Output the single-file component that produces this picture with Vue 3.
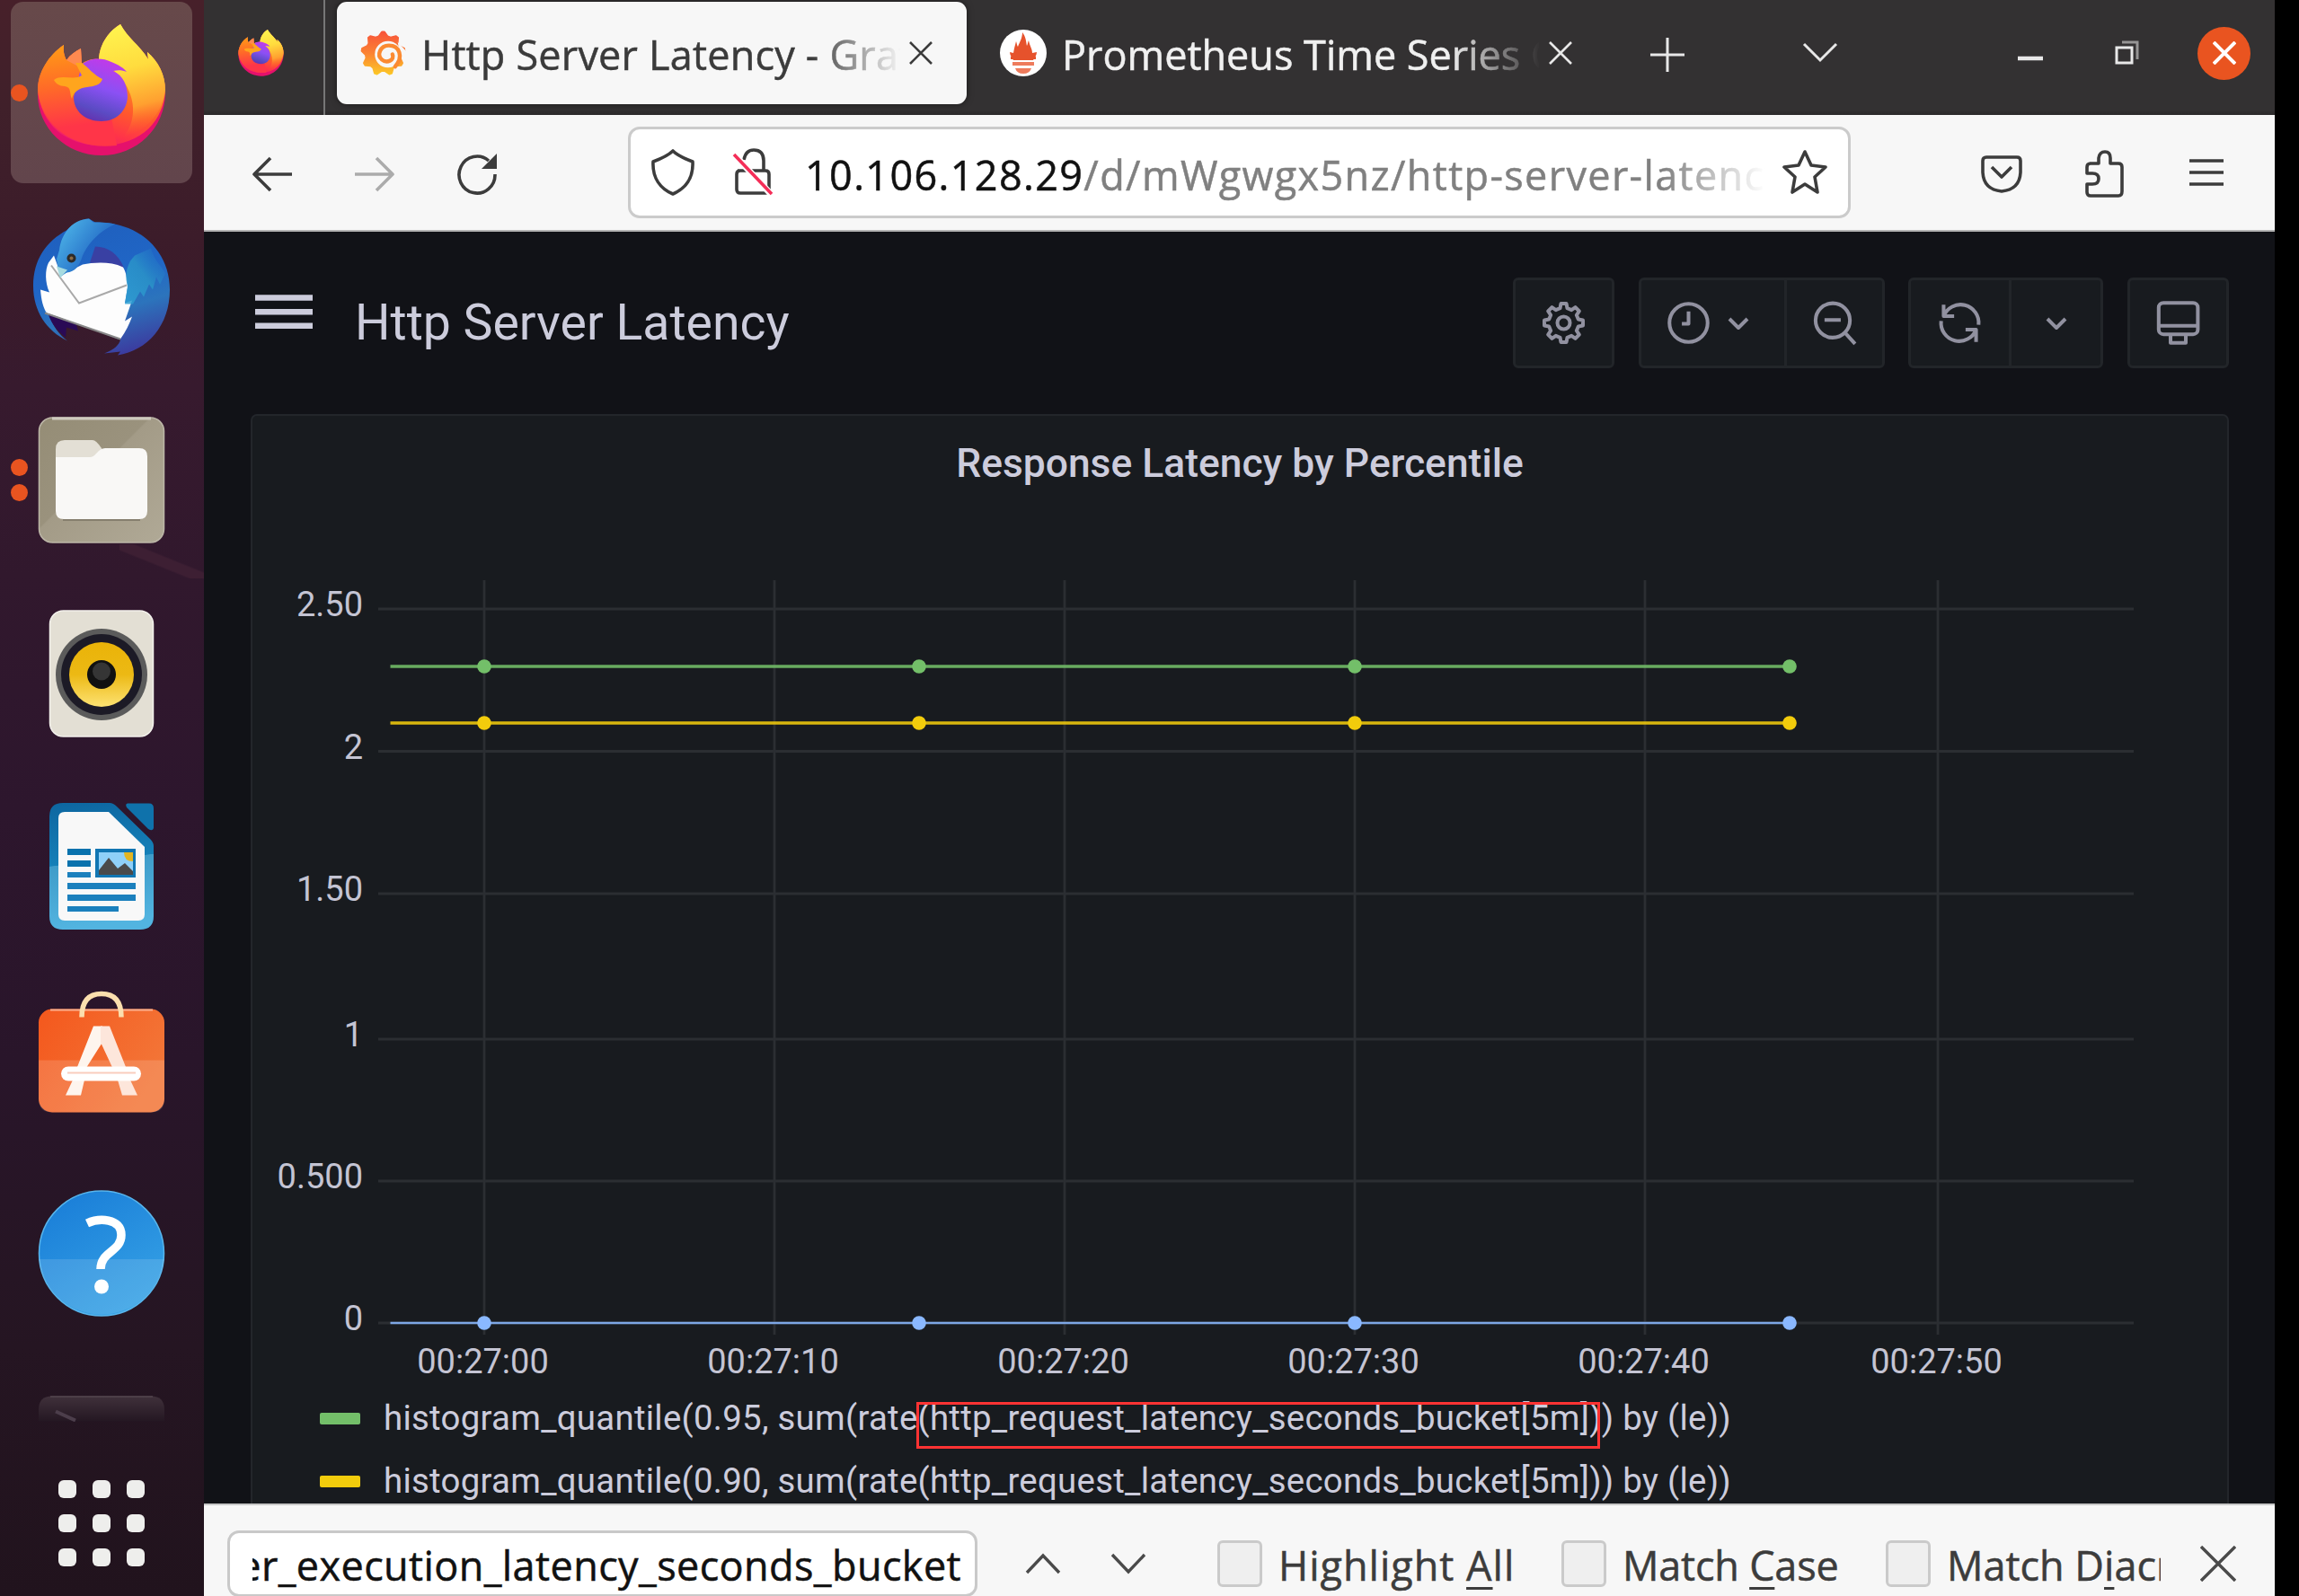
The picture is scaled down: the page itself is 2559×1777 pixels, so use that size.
<script setup>
const rows = [
  { y: 678, label: '2.50' }, { y: 836.5, label: '2' }, { y: 995, label: '1.50' },
  { y: 1157, label: '1' }, { y: 1315, label: '0.500' }, { y: 1473, label: '0' },
]
const cols = [
  { x: 539, label: '00:27:00' }, { x: 862, label: '00:27:10' }, { x: 1185, label: '00:27:20' },
  { x: 1508, label: '00:27:30' }, { x: 1831, label: '00:27:40' }, { x: 2157, label: '00:27:50' },
]
const series = [
  { y: 742, color: '#73bf69', w: 3.4 }, { y: 805, color: '#f2cc0c', w: 3.4 }, { y: 1473, color: '#8ab8ff', w: 2.4 },
]
const points = [539, 1023, 1508, 1992]

function ring(n, cx, cy, outer, inner, top, base) {
  const out = []
  for (let i = 0; i < n; i++) {
    const a = (i * 2 * Math.PI) / n - Math.PI / 2
    const steps = [[-base, inner], [-top, outer], [top, outer], [base, inner]]
    for (const [d, r] of steps) {
      out.push(`${(cx + r * Math.cos(a + d)).toFixed(2)} ${(cy + r * Math.sin(a + d)).toFixed(2)}`)
    }
  }
  return 'M' + out.join('L') + 'Z'
}
const gear = ring(8, 12, 12, 10.2, 7.9, 0.14, 0.24)
const burst = ring(9, 426.5, 60, 24.5, 20, 0.06, 0.26)
</script>

<template>
  <div class="screen">
    <aside class="dock">
      <div class="tile active">
        <i class="dots"><b></b></i>
        <svg viewBox="12 2 202 202">
          <defs>
            <linearGradient id="ffBody" x1=".7" y1=".1" x2=".4" y2="1">
              <stop offset="0" stop-color="#ffe03a" /><stop offset=".3" stop-color="#ff9a1f" />
              <stop offset=".62" stop-color="#ff5a2c" /><stop offset=".85" stop-color="#ff3349" /><stop offset="1" stop-color="#f0206a" />
            </linearGradient>
            <linearGradient id="ffFlame" x1=".3" y1="0" x2=".45" y2="1">
              <stop offset="0" stop-color="#fff44f" /><stop offset=".4" stop-color="#ffdc3e" /><stop offset=".75" stop-color="#ffa030" /><stop offset="1" stop-color="#ff5a2c" stop-opacity="0" />
            </linearGradient>
            <linearGradient id="ffLeft" x1=".4" y1="0" x2=".5" y2="1">
              <stop offset="0" stop-color="#ff9a16" /><stop offset=".4" stop-color="#ff6a28" /><stop offset=".8" stop-color="#ff3548" /><stop offset="1" stop-color="#ff3548" />
            </linearGradient>
            <linearGradient id="ffGlobe" x1=".6" y1="0" x2=".3" y2="1">
              <stop offset="0" stop-color="#c23ae8" /><stop offset=".45" stop-color="#8b50f4" /><stop offset=".8" stop-color="#5b4bc4" /><stop offset="1" stop-color="#6530ad" />
            </linearGradient>
            <symbol id="firefox" viewBox="42 27 142 147">
              <path d="M42 105C42 82 54 62 71 50C70 58 72 63 74 67C78 61 84 57 90 54L91 71C96 67 103 65 110 66C111 48 122 34 134 27C142 42 155 50 165 66L164 58C176 68 184 83 184 103C184 143 152 173 113 173C74 173 42 143 42 105Z" fill="#e5116c" />
              <path d="M42 101C42 80 54 62 71 50C70 58 72 63 74 67C78 61 84 57 90 54L91 71C96 67 103 65 110 66C111 48 122 34 134 27C142 42 155 50 165 66L164 58C176 68 184 83 184 101C182 132 160 162 113 162C72 162 46 138 42 101Z" fill="url(#ffBody)" />
              <path d="M42 101C42 80 54 62 71 50C70 58 72 63 74 67L91 72L120 110L130 162C80 168 46 138 42 101Z" fill="url(#ffLeft)" />
              <path d="M74 67C78 61 84 57 90 54L91 76Z" fill="#ff8a50" />
              <path d="M110 66C111 48 122 34 134 27C142 42 155 50 165 66L164 58C176 68 184 83 184 100C181 124 165 146 138 152C155 130 150 100 128 80C124 74 116 68 110 66Z" fill="url(#ffFlame)" />
              <path d="M91 72C98 65 112 63 124 69C132 72 138 76 141 80C136 78 131 78 126 79C137 84 142 95 142 108C141 124 129 135 113 135C95 135 82 124 82 108Z" fill="url(#ffGlobe)" />
              <path d="M60 89C68 82 82 90 91 84L84 70L91 70C98 75 105 84 114 88C112 95 104 96 97 97C88 98 82 102 80 110C77 104 80 97 72 96C66 96 62 93 60 89Z" fill="#ffa51d" />
            </symbol>
          </defs>
          <use href="#firefox" x="42" y="27" width="142" height="147" />
        </svg>
      </div>

      <div class="tile">
        <svg viewBox="12 217.5 202 202">
          <defs>
            <linearGradient id="tbBody" x1=".3" y1="0" x2=".6" y2="1">
              <stop offset="0" stop-color="#1f5fbd" /><stop offset=".45" stop-color="#2066c6" /><stop offset=".7" stop-color="#2c74bc" /><stop offset="1" stop-color="#3b3da0" />
            </linearGradient>
            <linearGradient id="tbHead" x1=".2" y1="0" x2=".9" y2=".5">
              <stop offset="0" stop-color="#4bb1e6" /><stop offset="1" stop-color="#1f62c2" />
            </linearGradient>
            <linearGradient id="tbWing" x1="1" y1="0" x2="0" y2="1">
              <stop offset="0" stop-color="#2273c8" stop-opacity="0" /><stop offset=".5" stop-color="#2a93c8" /><stop offset="1" stop-color="#2fa0d4" />
            </linearGradient>
          </defs>
          <path d="M75 379C52 368 37 346 37 318C37 288 52 268 74 256C80 250 89 243 99 243L106 247C154 246 189 278 189 322C189 362 164 390 131 395L134 391L116 393C128 388 132 384 134 378L54 348C58 362 66 372 75 379Z" fill="url(#tbBody)" />
          <path d="M54 350L85 361L87 368L74 364L73 375C63 367 57 359 54 350Z" fill="#2a0a55" />
          <path d="M106 274C120 274 132 282 138 298L100 292Z" fill="#3e3a9e" opacity=".85" />
          <path d="M60 284L54 292C50 300 50 314 55 325L45 322C46 334 48 342 52 348L134 377C140 369 144 360 147 352L139 357L147 334L139 337L142 320C142 310 140 302 137 297C122 290 104 292 92 294L68 306Z" fill="#fdfdfd" />
          <path d="M57 295L88 337L141 317" fill="none" stroke="#a9a9a9" stroke-width="2" />
          <path d="M50 348L134 377" fill="none" stroke="#888" stroke-width="2" />
          <path d="M142 318C139 308 140 300 145 290L150 284L168 276C172 290 180 296 184 304L178 316L174 308L170 322L166 316L160 330L156 324L148 338L139 338Z" fill="url(#tbWing)" opacity=".85" />
          <path d="M99 243C80 244 68 260 66 278L63 288L67 308L74 303C84 302 88 296 92 284C98 270 112 256 128 249C118 247 108 247 104 247Z" fill="url(#tbHead)" />
          <path d="M63 296L75 300L67 309Z" fill="#a7dbe0" />
          <circle cx="79.500" cy="287" r="5" fill="#2d2a28" />
          <circle cx="79.500" cy="287" r="2" fill="#8b6a45" />
        </svg>
      </div>

      <div class="tile">
        <i class="dots"><b></b><b></b></i>
        <svg viewBox="12 433 202 202">
          <defs>
            <linearGradient id="files" x1="0" y1="0" x2="1" y2="1">
              <stop offset="0" stop-color="#958d76" /><stop offset=".44" stop-color="#9a927d" /><stop offset=".45" stop-color="#a39b87" /><stop offset="1" stop-color="#b0a996" />
            </linearGradient>
          </defs>
          <rect x="43.500" y="465" width="139" height="139" rx="15" fill="url(#files)" stroke="#bdb7a8" stroke-width="1.500" />
          <path d="M58 466H168" stroke="#cfcabf" stroke-width="3" />
          <path d="M62 500Q62 490 72 490H103Q107 490 113 499V520H62Z" fill="#e3dfd5" />
          <path d="M62 509H100Q104 509 107 505L110 502Q113 499 117 499H155Q164 499 164 508V569Q164 578 155 578H71Q62 578 62 569Z" fill="#f9f8f6" />
          <path d="M70 579H156" stroke="#867f6e" stroke-width="2" />
        </svg>
      </div>

      <div class="tile">
        <svg viewBox="12 648.5 202 202">
          <defs>
            <linearGradient id="cone" x1="0" y1="0" x2="0" y2="1">
              <stop offset="0" stop-color="#eab308" /><stop offset=".5" stop-color="#ecb914" /><stop offset="1" stop-color="#fde272" />
            </linearGradient>
          </defs>
          <rect x="55.500" y="679.500" width="115" height="140" rx="15" fill="#e3dfd4" stroke="#f3f1ec" stroke-width="1.500" />
          <circle cx="113" cy="750.500" r="51" fill="#5b5b5b" />
          <circle cx="113" cy="750.500" r="45" fill="#1c1a26" />
          <circle cx="113" cy="750.500" r="36" fill="url(#cone)" />
          <circle cx="113" cy="750.500" r="16" fill="#111" />
          <circle cx="113" cy="747" r="10" fill="#353535" />
        </svg>
      </div>

      <div class="tile">
        <svg viewBox="12 864 202 202">
          <defs>
            <linearGradient id="writer" x1="0" y1="0" x2=".1" y2="1">
              <stop offset="0" stop-color="#0d66a0" /><stop offset=".495" stop-color="#1580b8" /><stop offset=".5" stop-color="#3f9cc9" /><stop offset="1" stop-color="#52b4e0" />
            </linearGradient>
          </defs>
          <path d="M70 894H122Q126 894 130 898L167 934Q171 938 171 942V1020Q171 1035 156 1035H70Q55 1035 55 1020V909Q55 894 70 894Z" fill="url(#writer)" />
          <path d="M142 894.500H166Q171 894.500 171 900V922Q170 926 165 923L141 899Q139 895 142 894.500Z" fill="#0f72ab" />
          <path d="M72 904H121L161 943V1018Q161 1025 154 1025H72Q65 1025 65 1018V911Q65 904 72 904Z" fill="#f8f8f8" />
          <g fill="#1b80bd">
            <rect x="75" y="945" width="26" height="7" fill="#0972ad" /><rect x="75" y="958" width="26" height="7" fill="#0972ad" />
            <rect x="75" y="971" width="26" height="6" /><rect x="75" y="983" width="76" height="7" />
            <rect x="75" y="996" width="76" height="7" /><rect x="75" y="1009" width="57" height="6" />
            <rect x="106" y="945" width="45" height="32" fill="#1176b2" />
          </g>
          <rect x="110" y="949" width="38" height="25" fill="#8fd0f8" />
          <path d="M138 949H148V959Q138 959 138 949Z" fill="#e3b521" />
          <path d="M110 969L121 955L131 967L139 961L148 970V974H110Z" fill="#4a4a4a" />
        </svg>
      </div>

      <div class="tile">
        <svg viewBox="12 1079.5 202 202">
          <defs>
            <linearGradient id="bag" x1="0" y1="0" x2="1" y2=".5">
              <stop offset="0" stop-color="#f4581d" /><stop offset="1" stop-color="#f37537" />
            </linearGradient>
          </defs>
          <rect x="43" y="1123" width="140" height="115" rx="15" fill="url(#bag)" />
          <path d="M43 1180H183V1223Q183 1238 168 1238H58Q43 1238 43 1223Z" fill="#fff" opacity=".15" />
          <path d="M56 1124H170" stroke="#f9b08f" stroke-width="2" />
          <path d="M91 1132Q91 1106 113 1106Q135 1106 135 1132" fill="none" stroke="#fbdfae" stroke-width="5.500" />
          <path d="M104 1142H114V1160L95 1190H85ZM81 1202H94L90 1219H73Z" fill="#fef5ee" />
          <path d="M112 1142H122L141 1190H126L112 1160ZM131 1202H145L153 1219H136Z" fill="#fde6db" />
          <rect x="68" y="1187" width="89" height="16" rx="8" fill="#fff" />
          <path d="M75 1194H151" stroke="#f9cdbd" stroke-width="2" />
        </svg>
      </div>

      <div class="tile">
        <svg viewBox="12 1295 202 202">
          <defs>
            <linearGradient id="help" x1=".2" y1="0" x2=".8" y2="1">
              <stop offset="0" stop-color="#1a7ed8" /><stop offset="1" stop-color="#36a3e6" />
            </linearGradient>
          </defs>
          <circle cx="113" cy="1395.500" r="69.500" fill="url(#help)" stroke="#58b5ec" stroke-width="1.500" />
          <path d="M43.500 1402H182.500A70 70 0 0 1 43.500 1402Z" fill="#fff" opacity=".13" />
          <path d="M97 1362C110 1356 135 1356 135 1375C135 1394 112 1393 112 1413" fill="none" stroke="#fff" stroke-width="9.500" />
          <circle cx="113" cy="1432.500" r="8" fill="#fff" />
        </svg>
      </div>

      <div class="tile peek">
        <svg viewBox="12 1510.5 202 72">
          <defs>
            <linearGradient id="term" x1="0" y1="0" x2="0" y2="1">
              <stop offset="0" stop-color="#40313b" /><stop offset="1" stop-color="#241722" />
            </linearGradient>
          </defs>
          <path d="M43 1582V1569Q43 1554 58 1554H168Q183 1554 183 1569V1582Z" fill="url(#term)" />
          <path d="M56 1554.500H170" stroke="#54464f" stroke-width="1.500" />
          <path d="M62 1571L84 1581" stroke="#4c3e4b" stroke-width="4" />
        </svg>
      </div>
      <div class="apps"><i v-for="n in 9" :key="n"></i></div>
    </aside>

    <main class="window">
      <header class="tabs">
        <div class="pin"><svg class="fav"><use href="#firefox" /></svg></div>
        <div class="tab current">
          <svg class="fav graf" viewBox="401 33 52 53">
            <defs>
              <linearGradient id="graf" x1="0" y1="0" x2="0" y2="1">
                <stop offset="0" stop-color="#f8543a" /><stop offset=".5" stop-color="#fb8232" /><stop offset="1" stop-color="#fcc626" />
              </linearGradient>
            </defs>
            <path :d="burst" fill="url(#graf)" stroke="url(#graf)" stroke-width="2" stroke-linejoin="round" />
            <circle cx="432" cy="61" r="15" fill="#f7f7f7" />
            <path d="M454 59L443 47L446 64Z" fill="#f7f7f7" />
            <path d="M440 75C450 64 445 51 433 51C423 51 419 62 425 67C431 72 440 67 437 61" fill="none" stroke="#fb8a31" stroke-width="4.500" stroke-linecap="round" />
          </svg>
          <span class="label">Http Server Latency - Grafana</span>
          <svg class="close" viewBox="0 0 26 26"><path d="M1 1L25 25M25 1L1 25" /></svg>
        </div>
        <div class="tab other">
          <svg class="fav" viewBox="0 0 52 52">
            <circle cx="26" cy="26" r="26" fill="#fff" />
            <path d="M15 34C13 31 11 28 11 25L15 26C16 20 17 17 18 13C19 16 19 18 20 19C22 14 25 9 25 3C29 8 29 13 30 18C31 16 31 14 32 12C33 18 36 21 36 26L41 25C41 28 39 31 37 34Z" fill="#e6522c" />
            <path d="M14 36H38V40H14ZM17 43H35Q33 49 26 49Q19 49 17 43Z" fill="#ee7b5c" />
            <path d="M12 30H40V33H12Z" fill="#e6522c" />
          </svg>
          <span class="label">Prometheus Time Series Collection</span>
          <svg class="close" viewBox="0 0 26 26"><path d="M1 1L25 25M25 1L1 25" /></svg>
        </div>
        <svg class="plus" viewBox="0 0 40 40"><path d="M20 1V39M1 20H39" /></svg>
        <svg class="more" viewBox="0 0 40 24"><path d="M2 2L20 20L38 2" /></svg>
        <svg class="min" viewBox="0 0 28 28"><path d="M0 20H28" stroke-width="4.500" /></svg>
        <svg class="restore" viewBox="0 0 28 28"><path d="M8 2H25V21" opacity=".55" /><rect x="2" y="8" width="17" height="17" /></svg>
        <div class="quit"><svg viewBox="0 0 26 26"><path d="M1 1L25 25M25 1L1 25" /></svg></div>
      </header>

      <nav class="toolbar">
        <svg class="back" viewBox="0 0 44 40"><path d="M20 2L2 20L20 38M2 20H44" /></svg>
        <svg class="fwd" viewBox="0 0 44 40"><path d="M24 2L42 20L24 38M42 20H0" /></svg>
        <svg class="reload" viewBox="0 0 46 48"><path d="M43 24A20 20.500 0 1 1 36 9" /><path d="M45 1V18H28Z" fill="#3c3c3c" stroke="none" /></svg>
        <div class="url">
          <svg class="shield" viewBox="0 0 48 52"><path d="M24 2C30 8 38 11 46 14C47 32 38 44 24 50C10 44 1 32 2 14C10 11 18 8 24 2Z" /></svg>
          <svg class="lock" viewBox="0 0 46 54">
            <path d="M6 25H37Q41 25 41 29V46Q41 50 37 50H9Q5 50 5 46V29Q5 25 9 25M13 13Q15 2 24 2Q35 2 35 14V25" />
            <path d="M2 7L43 51" stroke="#fff" stroke-width="7" /><path d="M2 7L44 51" stroke="#f42e58" />
          </svg>
          <span class="address"><b>10.106.128.29</b><span>/d/mWgwgx5nz/http-server-latency</span></span>
          <svg class="star" viewBox="0 0 52 52"><path d="M26 3L33 18L49 20L37 31L40 48L26 39L12 48L15 31L3 20L19 18Z" /></svg>
        </div>
        <svg class="pocket" viewBox="0 0 46 42"><path d="M6 2H40Q44 2 44 6V19Q43 38 23 40Q3 38 2 19V6Q2 2 6 2ZM12 13L23 24L34 13" /></svg>
        <svg class="puzzle" viewBox="0 0 46 54"><path d="M6 15H16V9Q17 2 23 2Q29 2 29 9V15H38Q42 15 42 19V46Q42 51 38 51H7Q3 51 3 47V38H9Q16 38 16 32Q16 26 9 26H3V19Q3 15 7 15" /></svg>
        <svg class="menu" viewBox="0 0 38 32"><path d="M0 3H38M0 16H38M0 29H38" /></svg>
      </nav>

      <section class="grafana">
        <div class="topbar">
          <svg class="burger" viewBox="0 0 64 38"><path d="M0 3.500H64M0 19.300H64M0 34.800H64" /></svg>
          <h1>Http Server Latency</h1>
          <div class="group"><button class="w113"><svg viewBox="0 0 24 24"><path :d="gear" /><circle cx="12" cy="12" r="3.300" /></svg></button></div>
          <div class="group">
            <button class="w163">
              <svg viewBox="0 0 24 24"><circle cx="12" cy="12" r="10" /><path d="M12 6V12.500H8.500" /></svg>
              <svg class="caret" viewBox="0 0 24 16"><path d="M2 3L12 13L22 3" /></svg>
            </button>
            <button class="w111"><svg viewBox="0 0 24 24"><circle cx="11.300" cy="10.700" r="9" /><path d="M7 10.500H15.500M18 17.500L23 23" /></svg></button>
          </div>
          <div class="group">
            <button class="w112"><svg viewBox="0 0 24 24"><path d="M3.500 8.500A9.500 9.500 0 0 1 21.800 13M3.500 2.500V8.500H9M20.500 15.500A9.500 9.500 0 0 1 2.200 11M20.500 22V15.500H15" /></svg></button>
            <button class="w105"><svg class="caret" viewBox="0 0 24 16"><path d="M2 3L12 13L22 3" /></svg></button>
          </div>
          <div class="group"><button class="w113"><svg viewBox="0 0 24 24"><rect x="1.800" y="1.500" width="20.500" height="16.500" rx="2.500" /><path d="M2 13.500H22M8 18V22.500H16V18" /></svg></button></div>
        </div>

        <div class="panel">
          <h2>Response Latency by Percentile</h2>
          <svg class="chart" viewBox="281 570 2198 974">
            <g class="grid">
              <path v-for="r in rows" :key="r.y" :d="`M421 ${r.y}H2375`" />
              <path v-for="c in cols" :key="c.x" :d="`M${c.x} 646V1486`" />
            </g>
            <g class="axis">
              <text v-for="r in rows" :key="r.y" x="404" :y="r.y + 8" text-anchor="end">{{ r.label }}</text>
              <text v-for="c in cols" :key="c.x" :x="c.x - 1.500" y="1528.500" text-anchor="middle">{{ c.label }}</text>
            </g>
            <g v-for="s in series" :key="s.y" :fill="s.color" :stroke="s.color">
              <path :d="`M434.500 ${s.y}H1992`" :stroke-width="s.w" stroke-opacity=".88" />
              <circle v-for="p in points" :key="p" :cx="p" :cy="s.y" r="7.800" stroke="none" />
            </g>
          </svg>
          <div class="legend">
            <p><i class="green"></i>histogram_quantile(0.95, sum(rate<mark>(http_request_latency_seconds_bucket[5m])</mark>) by (le))</p>
            <p><i class="yellow"></i>histogram_quantile(0.90, sum(rate(http_request_latency_seconds_bucket[5m])) by (le))</p>
          </div>
        </div>
      </section>

      <footer class="findbar">
        <div class="query"><span>scheduler_execution_latency_seconds_bucket</span></div>
        <svg class="up" viewBox="0 0 40 24"><path d="M2 22L20 3L38 22" /></svg>
        <svg class="down" viewBox="0 0 40 24"><path d="M2 2L20 21L38 2" /></svg>
        <label class="c1"><i></i><span>Highlight <u>A</u>ll</span></label>
        <label class="c2"><i></i><span>Match <u>C</u>ase</span></label>
        <label class="c3"><i></i><span>Match D<u>i</u>acritics</span></label>
        <svg class="x" viewBox="0 0 40 40"><path d="M1 1L39 39M39 1L1 39" /></svg>
      </footer>
    </main>
  </div>
</template>

<style>
body { margin: 0; background: #000; }
</style>

<style scoped>
* { box-sizing: border-box; }
.screen { display: flex; width: 2559px; height: 1777px; overflow: hidden; background: #000; font-family: "Open Sans", "Noto Sans", sans-serif; -webkit-text-stroke: .5px; }
svg { display: block; flex: none; fill: none; }

.dock {
  width: 227px; flex: none; padding: 2px 0 0 12px; display: flex; flex-direction: column; gap: 13.5px;
  background:
    linear-gradient(to top right, transparent 40%, #3d1f33 43%, #3d1f33 57%, transparent 60%) 133px 606px / 94px 38px no-repeat,
    linear-gradient(#47202a 0, #40202a 120px, #3b1b2a 300px, #371a2e 430px, #31182d 640px, #2d162d 900px, #29152a 1180px, #251522 1500px, #21131d 1777px);
}
.tile { position: relative; width: 202px; height: 202px; flex: none; border-radius: 14px; }
.tile svg { width: 202px; height: 202px; }
.tile.active { background: linear-gradient(#67494a, #62454c); }
.tile.peek, .tile.peek svg { height: 72px; border-radius: 0; }
.dots { position: absolute; left: 0; top: 0; height: 100%; display: flex; flex-direction: column; justify-content: center; gap: 9px; }
.dots b { display: block; width: 19px; height: 19px; border-radius: 50%; background: #e95420; }
.apps { display: grid; grid-template-columns: repeat(3, 20px); gap: 18px; margin: 52px 0 0 53px; }
.apps i { height: 20px; border-radius: 6px; background: #eeeeec; }

.window { width: 2305px; flex: none; display: flex; flex-direction: column; height: 1777px; }
.tabs { height: 128px; flex: none; background: linear-gradient(#333132 0, #333132 122px, #2b292a 128px); display: flex; align-items: center; padding-bottom: 10px; }
.tabs > svg { stroke: #e8e8e8; stroke-width: 3; }
.pin { width: 135px; height: 128px; margin-bottom: -10px; border-right: 2px solid #777; padding: 33px 0 0 38px; flex: none; }
.fav { width: 52px; height: 52px; }
.pin .fav { width: 51px; height: 52px; }
.tab { display: flex; align-items: center; height: 114px; flex: none; border-radius: 11px; }
.tab .label { font-size: 45px; line-height: 60px; white-space: nowrap; overflow: hidden; margin-top: 4px; -webkit-mask-image: linear-gradient(90deg, #000 calc(100% - 100px), transparent); mask-image: linear-gradient(90deg, #000 calc(100% - 100px), transparent); }
.tab .close { width: 26px; height: 26px; stroke-width: 2.6; }
.current { width: 701px; margin-left: 13px; background: #f7f7f7; color: #3b3b3b; padding-left: 26px; box-shadow: 0 0 7px rgba(0, 0, 0, .5); }
.current .label { width: 534px; margin-left: 16px; letter-spacing: .2px; }
.current .close { stroke: #3b3b3b; margin-left: 9px; }
.other { color: #f0f0f0; margin-left: 37px; width: 639px; }
.other .label { width: 532px; margin-left: 17px; }
.other .close { stroke: #e8e8e8; margin-left: 10px; }
.plus { width: 40px; height: 40px; margin: 4px 0 0 84px; }
.more { width: 40px; height: 24px; margin-left: 130px; }
.min { width: 28px; height: 28px; margin-left: 200px; }
.restore { width: 28px; height: 28px; margin-left: 80px; }
.quit { width: 59px; height: 59px; border-radius: 50%; background: #e95420; display: grid; place-items: center; margin-left: 64px; flex: none; }
.quit svg { width: 26px; height: 26px; stroke: #fff; stroke-width: 4; }

.toolbar { height: 130px; flex: none; background: #f7f7f7; border-bottom: 2px solid #b4b4b4; display: flex; align-items: center; padding: 4px 0 0 54px; }
.toolbar svg { stroke: #3c3c3c; stroke-width: 3.6; stroke-linejoin: round; }
.back { width: 44px; height: 40px; }
.fwd { width: 44px; height: 40px; margin-left: 70px; opacity: .4; }
.reload { width: 46px; height: 48px; margin-left: 69px; }
.url { width: 1361px; height: 102px; margin-left: 145px; margin-top: -5px; background: #fff; border: 3px solid #cbcbcb; border-radius: 13px; display: flex; align-items: center; padding-left: 23px; flex: none; }
.url svg { margin-top: 1px; }
.shield { width: 48px; height: 52px; }
.lock { width: 46px; height: 54px; margin-left: 42px; }
.address { width: 1073px; margin: 6px 0 0 35px; overflow: hidden; white-space: nowrap; font-size: 45px; line-height: 64px; letter-spacing: 1.35px; -webkit-mask-image: linear-gradient(90deg, #000 calc(100% - 120px), transparent calc(100% - 4px)); mask-image: linear-gradient(90deg, #000 calc(100% - 120px), transparent calc(100% - 4px)); }
.address b { font-weight: 400; color: #111; }
.address span { color: #808080; }
.star { width: 52px; height: 52px; margin-left: 14px; }
.pocket { width: 46px; height: 42px; margin-left: 145px; }
.puzzle { width: 46px; height: 54px; margin-left: 69px; }
.menu { width: 38px; height: 32px; margin: -4px 0 0 71px; }

.grafana { height: 1416px; flex: none; background: #111217; overflow: hidden; font-family: Roboto, sans-serif; color: #ccccdc; display: flex; flex-direction: column; -webkit-text-stroke: 0; }
.topbar { height: 203px; flex: none; display: flex; align-items: center; padding-left: 57px; }
.burger { width: 64px; height: 38px; margin-top: -26px; stroke: #ccccdc; stroke-width: 6.5; }
h1 { margin: 0; margin-left: 47px; width: 1289px; font-weight: 400; font-size: 55.4px; line-height: 70px; flex: none; }
.group { display: flex; height: 101px; border: 3px solid #222529; border-radius: 6px; background: #181b1f; margin-right: 26.5px; flex: none; }
button { border: 0; background: none; padding: 0; display: flex; align-items: center; justify-content: center; gap: 18px; }
button + button { border-left: 3px solid #222529; }
button svg { width: 51px; height: 51px; stroke: #9191a0; stroke-width: 1.9; stroke-linejoin: round; }
button svg.caret { width: 24px; height: 16px; stroke-width: 4; }
.w113 { width: 107px; } .w163 { width: 159px; padding-right: 12px; } .w111 { width: 109px; } .w112 { width: 109px; } .w105 { width: 102px; }
.panel { width: 2202px; height: 1300px; flex: none; margin-left: 52px; background: #181b1f; border: 2px solid #23262b; border-radius: 7px; display: flex; flex-direction: column; }
h2 { margin: 0; height: 107px; flex: none; text-align: center; font-weight: 500; font-size: 44.4px; line-height: 106px; }
.chart { width: 2198px; height: 974px; }
.grid { stroke: #2b2e32; stroke-width: 2.8; }
.axis { fill: #c4c4d3; font-size: 38px; }
.legend { padding-left: 75px; }
.legend p { margin: 0; height: 70px; line-height: 70px; display: flex; align-items: center; white-space: pre; font-size: 38.4px; letter-spacing: .27px; }
.legend i { width: 45px; height: 13px; margin-right: 26px; border-radius: 2px; }
.green { background: #73bf69; }
.yellow { background: #f2cc0c; }
mark { position: relative; background: none; color: inherit; }
mark::after { content: ""; position: absolute; box-sizing: border-box; left: -2px; right: 2px; top: 17px; height: 52px; border: 3px solid #ff3333; }

.findbar { height: 103px; flex: none; background: #f7f7f7; border-top: 2px solid #c8c8c8; display: flex; align-items: center; color: #3c3c3c; font-size: 45px; padding-left: 26px; }
.findbar svg { stroke: #4a4a4a; stroke-width: 3.4; }
.query { width: 835px; height: 74px; margin-top: 28px; border: 3px solid #c9c9c9; border-radius: 13px; background: #fff; color: #111; flex: none; padding: 0 15px 0 25px; align-self: flex-start; }
.query span { display: flex; justify-content: flex-end; overflow: hidden; line-height: 72px; height: 68px; letter-spacing: .4px; }
.findbar > svg, .findbar > label { margin-top: 28px; }
.up { width: 40px; height: 24px; margin-left: 53px; }
.down { width: 40px; height: 24px; margin-left: 55px; }
label { display: flex; align-items: center; white-space: nowrap; flex: none; }
label i { width: 50px; height: 52px; border: 3px solid #cacaca; border-radius: 6px; background: #efefef; flex: none; }
label span { line-height: 64px; margin: 4px 0 0 18px; overflow: hidden; }
u { text-decoration-thickness: 3px; text-underline-offset: 7px; }
.c1 { width: 383px; margin-left: 79px; }
.c1 span { letter-spacing: 1px; }
.c2 { width: 361px; }
.c2 span { letter-spacing: -.2px; }
.c3 { width: 306px; }
.x { width: 40px; height: 40px; margin-left: 44px; }
</style>
